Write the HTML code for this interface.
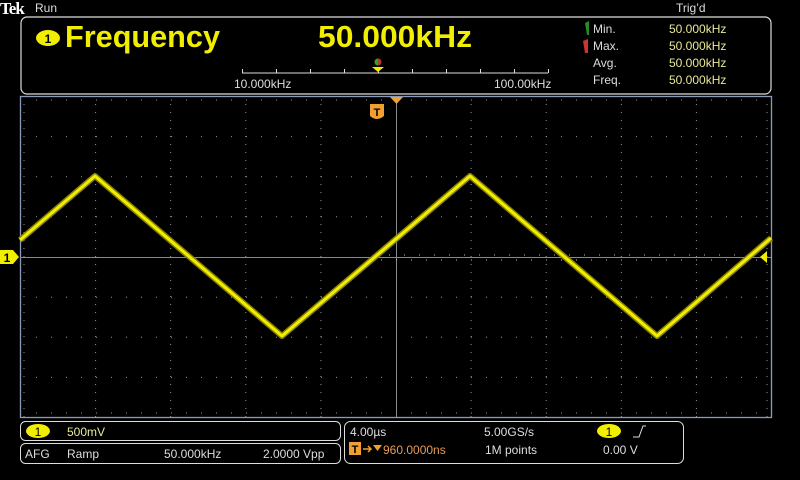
<!DOCTYPE html>
<html><head><meta charset="utf-8"><style>
html,body{margin:0;padding:0;background:#000;width:800px;height:480px;overflow:hidden}
svg{display:block}
text{font-family:"Liberation Sans",sans-serif}
</style></head><body>
<svg width="800" height="480" viewBox="0 0 800 480">
<rect width="800" height="480" fill="#000"/>
<!-- header -->
<text x="0" y="14" style="font-family:'Liberation Serif',serif" font-weight="bold" font-size="17" fill="#fff" letter-spacing="-1">Tek</text>
<text x="35" y="12" font-size="12" fill="#ddd">Run</text>
<text x="676" y="12" font-size="12" fill="#ddd">Trig’d</text>
<rect x="21" y="17" width="750" height="77" rx="6" fill="none" stroke="#ddd" stroke-width="1.2"/>
<ellipse cx="48" cy="38" rx="12" ry="8" fill="#f2ee00"/>
<text x="48" y="43" font-size="12" font-weight="bold" fill="#000" text-anchor="middle">1</text>
<text x="65" y="47" font-size="31" font-weight="bold" fill="#f2ee00" textLength="155" lengthAdjust="spacingAndGlyphs">Frequency</text>
<text x="318" y="47" font-size="31" font-weight="bold" fill="#f2ee00" textLength="154" lengthAdjust="spacingAndGlyphs">50.000kHz</text>
<!-- scale -->
<line x1="242" y1="73" x2="548" y2="73" stroke="#ddd" stroke-width="1"/>
<g stroke="#ddd">
<line x1="242.5" y1="69" x2="242.5" y2="73"/><line x1="276.5" y1="69" x2="276.5" y2="73"/><line x1="310.5" y1="69" x2="310.5" y2="73"/><line x1="344.5" y1="69" x2="344.5" y2="73"/><line x1="378.5" y1="69" x2="378.5" y2="73"/><line x1="412.5" y1="69" x2="412.5" y2="73"/><line x1="446.5" y1="69" x2="446.5" y2="73"/><line x1="480.5" y1="69" x2="480.5" y2="73"/><line x1="514.5" y1="69" x2="514.5" y2="73"/><line x1="548.5" y1="69" x2="548.5" y2="73"/>
</g>
<path d="M372 67 L384 67 L378 72 Z" fill="#f2ee00"/>
<circle cx="378" cy="62" r="3.5" fill="#b33"/><path d="M374.5 62 A3.5 3.5 0 0 0 378 65.5 L378 58.5 A3.5 3.5 0 0 0 374.5 62Z" fill="#2a2"/>
<text x="234" y="88" font-size="12" fill="#ddd">10.000kHz</text>
<text x="494" y="88" font-size="12" fill="#ddd">100.00kHz</text>
<path d="M585 23 L589 21 L589 35 L587 35 Z" fill="#2a8a2a"/>
<path d="M583 41 L588 39 L588 53 L585 53 Z" fill="#c33"/>
<g font-size="12" fill="#ddd"><text x="593" y="33">Min.</text><text x="593" y="50">Max.</text><text x="593" y="67">Avg.</text><text x="593" y="84">Freq.</text></g>
<g font-size="12" fill="#e8e89a"><text x="669" y="33">50.000kHz</text><text x="669" y="50">50.000kHz</text><text x="669" y="67">50.000kHz</text><text x="669" y="84">50.000kHz</text></g>
<!-- graticule -->
<rect x="20.5" y="96.5" width="751" height="321" fill="none" stroke="#8a9ab8" stroke-width="1.3"/>
<g stroke="#999" stroke-width="1" stroke-dasharray="1 7">
<line x1="95.6" y1="104" x2="95.6" y2="417"/><line x1="170.7" y1="104" x2="170.7" y2="417"/><line x1="245.8" y1="104" x2="245.8" y2="417"/><line x1="320.9" y1="104" x2="320.9" y2="417"/>
<line x1="471.1" y1="104" x2="471.1" y2="417"/><line x1="546.2" y1="104" x2="546.2" y2="417"/><line x1="621.3" y1="104" x2="621.3" y2="417"/><line x1="696.4" y1="104" x2="696.4" y2="417"/>
</g>
<g stroke="#999" stroke-width="1" stroke-dasharray="1 14">
<line x1="36" y1="136.6" x2="771" y2="136.6"/><line x1="36" y1="176.7" x2="771" y2="176.7"/><line x1="36" y1="216.8" x2="771" y2="216.8"/>
<line x1="36" y1="297.2" x2="771" y2="297.2"/><line x1="36" y1="337.3" x2="771" y2="337.3"/><line x1="36" y1="377.4" x2="771" y2="377.4"/>
</g>
<g stroke="#999" stroke-width="1" stroke-dasharray="1 14">
<line x1="36" y1="100" x2="771" y2="100"/><line x1="36" y1="413" x2="771" y2="413"/>
</g>
<g stroke="#999" stroke-width="1" stroke-dasharray="1 7">
<line x1="24" y1="104" x2="24" y2="417"/><line x1="767" y1="104" x2="767" y2="417"/>
</g>
<line x1="20" y1="257.5" x2="771" y2="257.5" stroke="#8a8a8a" stroke-width="1"/>
<line x1="396.5" y1="97" x2="396.5" y2="417" stroke="#8a8a8a" stroke-width="1"/>
<g stroke="#bbb" stroke-width="1" stroke-dasharray="1 14"><line x1="389" y1="255" x2="771" y2="255"/><line x1="381" y1="260" x2="771" y2="260"/></g>
<!-- waveform -->
<polyline points="20,240 95,176 282,336 470,176 657,336 771,238" fill="none" stroke="#8a8400" stroke-width="6" stroke-linejoin="round"/>
<polyline points="20,240 95,176 282,336 470,176 657,336 771,238" fill="none" stroke="#f2ee00" stroke-width="3" stroke-linejoin="round"/>
<!-- markers -->
<path d="M390 97 L403 97 L396.5 104 Z" fill="#f0a030"/>
<path d="M370 104 L384 104 L384 116 Q377 122 370 116 Z" fill="#f0a030"/>
<text x="377" y="116" font-size="11" font-weight="bold" fill="#000" text-anchor="middle">T</text>
<path d="M0 250 L13 250 L19 257 L13 264 L0 264 Z" fill="#f2ee00"/>
<text x="7" y="262" font-size="12" font-weight="bold" fill="#000" text-anchor="middle">1</text>
<path d="M760 257 L767 251 L767 263 Z" fill="#f2ee00"/>
<!-- bottom boxes -->
<rect x="20.5" y="421.5" width="320" height="19" rx="5" fill="none" stroke="#ddd"/>
<rect x="20.5" y="443.5" width="320" height="20" rx="5" fill="none" stroke="#ddd"/>
<ellipse cx="38" cy="431" rx="12" ry="7" fill="#f2ee00"/>
<text x="38" y="436" font-size="12" fill="#000" text-anchor="middle">1</text>
<text x="67" y="436" font-size="12" fill="#e8e89a">500mV</text>
<g font-size="12" fill="#ddd">
<text x="25" y="458">AFG</text><text x="67" y="458">Ramp</text><text x="164" y="458">50.000kHz</text><text x="263" y="458">2.0000 Vpp</text>
</g>
<rect x="344.5" y="421.5" width="339" height="42" rx="6" fill="none" stroke="#ddd"/>
<g font-size="12" fill="#ddd">
<text x="350" y="436">4.00µs</text><text x="484" y="436">5.00GS/s</text>
<text x="485" y="454">1M points</text><text x="603" y="454">0.00 V</text>
</g>
<ellipse cx="609" cy="431" rx="12" ry="7" fill="#f2ee00"/>
<text x="609" y="436" font-size="12" fill="#000" text-anchor="middle">1</text>
<path d="M633 437 L639 437 L643 426 L646 426" fill="none" stroke="#ddd" stroke-width="1"/>
<rect x="349" y="442" width="12" height="13" fill="#f0a030"/>
<text x="355" y="453" font-size="11" font-weight="bold" fill="#000" text-anchor="middle">T</text>
<path d="M363 449 L371 449 M368 446 L371 449 L368 452" stroke="#f0a030" stroke-width="1.5" fill="none"/>
<path d="M373 445 L382 445 L377.5 451 Z" fill="#f0a030"/>
<text x="383" y="454" font-size="12" fill="#e89a5a">960.0000ns</text>
</svg>
</body></html>
